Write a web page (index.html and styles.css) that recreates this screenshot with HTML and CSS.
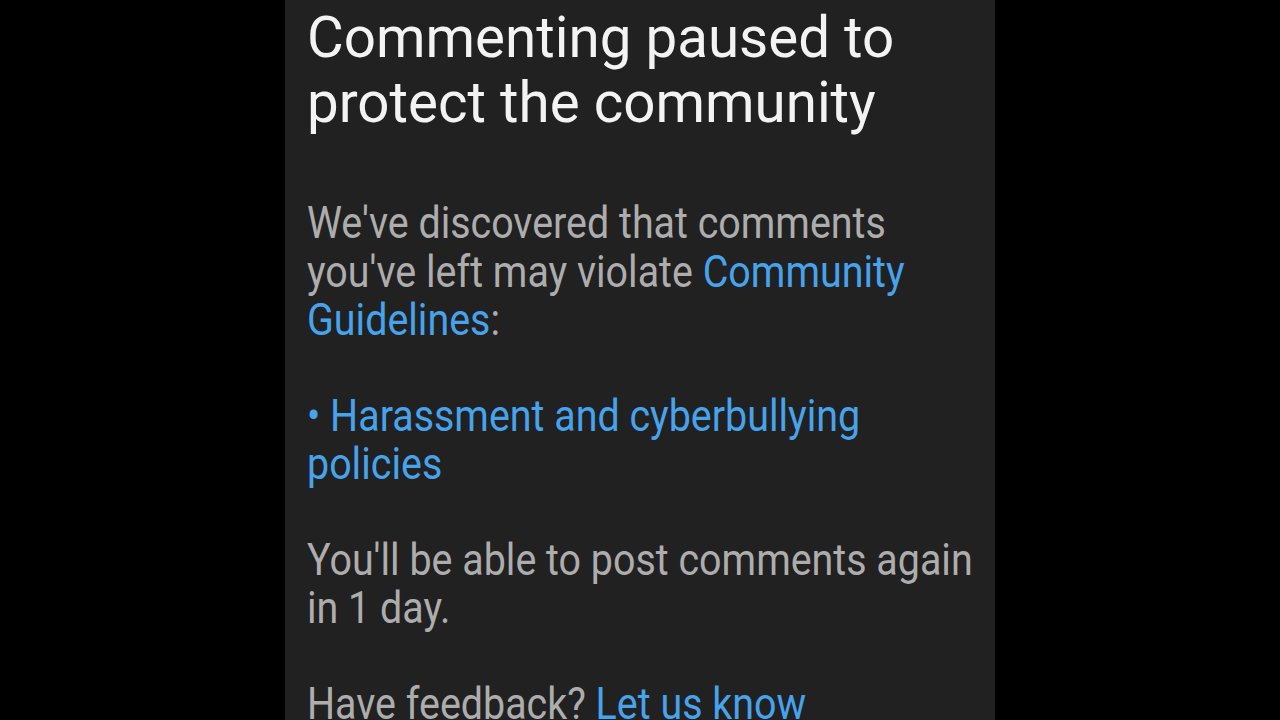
FILE: index.html
```html
<!DOCTYPE html>
<html>
<head>
<meta charset="utf-8">
<link rel="stylesheet" href="styles.css">
</head>
<body>
<main class="panel">
  <h1 class="title">Commenting paused to protect the community</h1>
  <p class="para">We've discovered that comments you've left may violate <span class="link">Community Guidelines</span>:</p>
  <p class="para link">• Harassment and cyberbullying policies</p>
  <p class="para">You'll be able to post comments again in 1 day.</p>
  <p class="para">Have feedback? <span class="link">Let us know</span></p>
</main>
</body>
</html>
```
FILE: styles.css
```css
html, body {
  margin: 0;
  padding: 0;
  background: #000;
  height: 720px;
  overflow: hidden;
}
body {
  display: flex;
  justify-content: center;
  font-family: Roboto, "Noto Sans", sans-serif;
}
.panel {
  width: 710px;
  height: 720px;
  background: #212121;
  box-sizing: border-box;
  padding: 0 0 0 22px;
}
.title {
  margin: 0;
  padding-top: 6px;
  font-weight: 400;
  font-size: 56.5px;
  line-height: 65px;
  color: #f3f3f3;
}
.para {
  margin: 0 0 47px 0;
  width: 745px;
  font-size: 43.5px;
  line-height: 48.5px;
  color: #adadad;
  transform: scaleX(0.906);
  transform-origin: left top;
}
.title + .para {
  margin-top: 64px;
}
.link {
  color: #46a3ec;
}
```
